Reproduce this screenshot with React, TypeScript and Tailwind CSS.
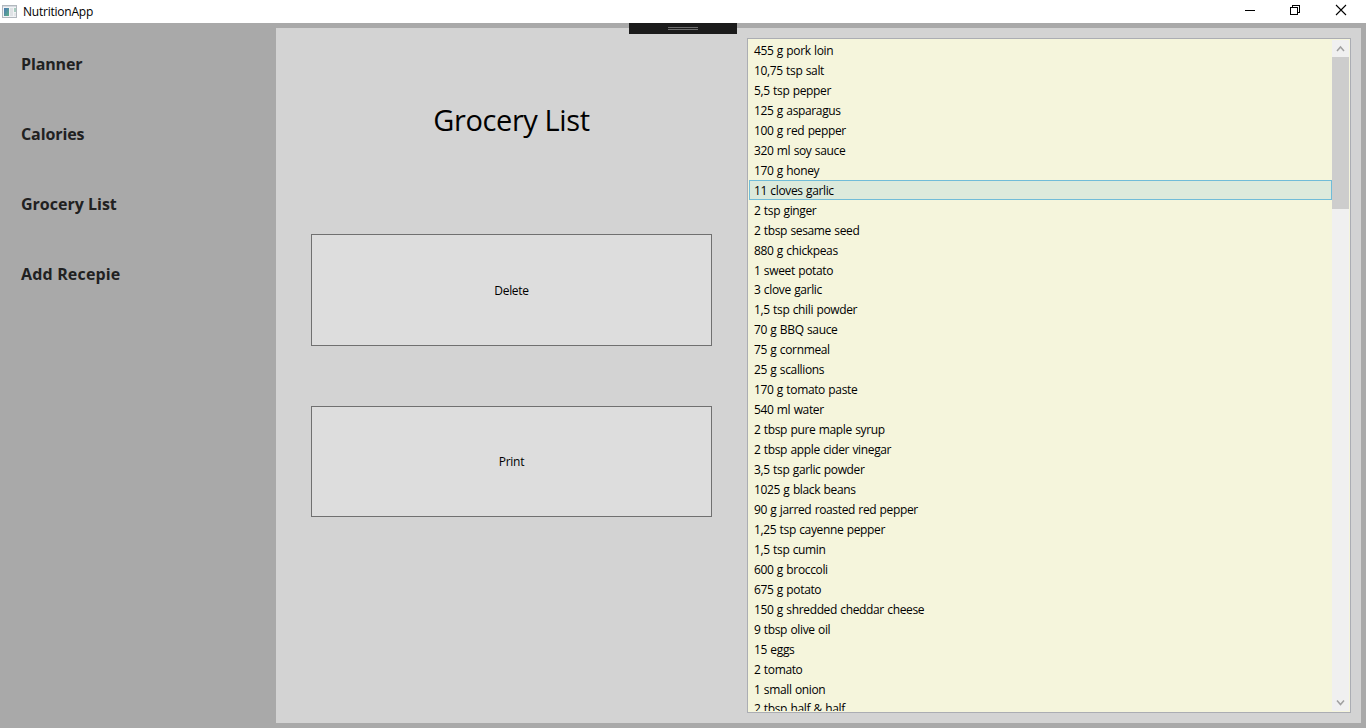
const nav = [
  { label: 'Planner', tracking: 'tracking-[-0.15px]' },
  { label: 'Calories', tracking: 'tracking-[-0.1px]' },
  { label: 'Grocery List', tracking: 'tracking-normal' },
  { label: 'Add Recepie', tracking: 'tracking-[0.17px]' },
];

const groceries = [
  '455 g pork loin',
  '10,75 tsp salt',
  '5,5 tsp pepper',
  '125 g asparagus',
  '100 g red pepper',
  '320 ml soy sauce',
  '170 g honey',
  '11 cloves garlic',
  '2 tsp ginger',
  '2 tbsp sesame seed',
  '880 g chickpeas',
  '1 sweet potato',
  '3 clove garlic',
  '1,5 tsp chili powder',
  '70 g BBQ sauce',
  '75 g cornmeal',
  '25 g scallions',
  '170 g tomato paste',
  '540 ml water',
  '2 tbsp pure maple syrup',
  '2 tbsp apple cider vinegar',
  '3,5 tsp garlic powder',
  '1025 g black beans',
  '90 g jarred roasted red pepper',
  '1,25 tsp cayenne pepper',
  '1,5 tsp cumin',
  '600 g broccoli',
  '675 g potato',
  '150 g shredded cheddar cheese',
  '9 tbsp olive oil',
  '15 eggs',
  '2 tomato',
  '1 small onion',
  '2 tbsp half & half',
];

const selected = 7;

function TitleBar() {
  return (
    <header className="flex h-[23px] shrink-0 items-center bg-white">
      <svg className="ml-[2px] h-[14px] w-4" viewBox="0 0 16 14">
        <defs>
          <linearGradient id="pane" x1="0" y1="0" x2="1" y2="1">
            <stop offset="0" stopColor="#4a78b4" />
            <stop offset="1" stopColor="#5fb088" />
          </linearGradient>
        </defs>
        <rect x="0.5" y="0.5" width="14" height="12" fill="#f2f3f5" stroke="#b2b8be" />
        <rect x="1" y="1" width="13" height="1" fill="#d5dae0" />
        <rect x="2" y="3" width="5" height="8" fill="url(#pane)" />
        <rect x="8" y="3" width="3" height="8" fill="#dfe2e5" />
        <rect x="12" y="3" width="2" height="4" fill="#a9cdc0" />
        <rect x="12" y="8" width="2" height="3" fill="#e3e6e8" />
      </svg>
      <span className="ml-[5px] text-[12px] leading-4 tracking-[-0.23px]">NutritionApp</span>
      <div className="mr-[2px] ml-auto flex h-full">
        <svg className="h-[23px] w-[46px]" viewBox="0 0 46 23" shapeRendering="crispEdges">
          <path d="M19 10.5h10" stroke="#000" fill="none" />
        </svg>
        <svg className="h-[23px] w-[46px]" viewBox="0 0 46 23" shapeRendering="crispEdges">
          <path d="M18.5 7.5h7v7h-7zM20.5 7.5v-2h7v7h-2" stroke="#000" fill="none" />
        </svg>
        <svg className="h-[23px] w-[46px]" viewBox="0 0 46 23">
          <path d="M18 5l10 10M28 5l-10 10" stroke="#000" fill="none" strokeWidth="1.1" />
        </svg>
      </div>
    </header>
  );
}

function ScrollBar() {
  return (
    <div className="flex w-[17px] shrink-0 flex-col bg-[#f0f0f0]">
      <svg className="h-[17px] w-[17px]" viewBox="0 0 17 17">
        <path d="M5 11l3.5-4 3.5 4" stroke="#a0a0a0" strokeWidth="1.5" fill="none" />
      </svg>
      <div className="h-[152px] bg-[#cdcdcd]" />
      <svg className="mt-auto h-[17px] w-[17px]" viewBox="0 0 17 17">
        <path d="M5 6.5l3.500 4L12 6.5" stroke="#a0a0a0" strokeWidth="1.5" fill="none" />
      </svg>
    </div>
  );
}

export default function App() {
  return (
    <div className="flex h-[728px] w-[1366px] flex-col overflow-hidden bg-[#a9a9a9] font-['Open_Sans','Noto_Sans',sans-serif] text-black">
      <TitleBar />
      <div className="relative flex flex-1 pt-[5px] pr-[5px] pb-[5px]">
        <nav className="flex w-[276px] shrink-0 flex-col pt-px pl-[21px] text-[16px] font-bold text-[#212121]">
          {nav.map(({ label, tracking }) => (
            <a key={label} className={'flex h-[70px] items-center ' + tracking}>
              {label}
            </a>
          ))}
        </nav>
        <main className="flex flex-1 bg-[#d3d3d3]">
          <section className="flex w-[471px] shrink-0 flex-col items-center">
            <h1 className="mt-[72px] text-[29px] leading-10 tracking-[-0.4px]">Grocery List</h1>
            <button className="mt-[94px] h-[112px] w-[401px] border border-[#707070] bg-[#dddddd] pt-px text-[12px] tracking-[-0.3px]">
              Delete
            </button>
            <button className="mt-[60px] h-[111px] w-[401px] border border-[#707070] bg-[#dddddd] text-[12px] tracking-[-0.3px]">
              Print
            </button>
          </section>
          <div className="mt-[10px] flex h-[675px] w-[604px] overflow-hidden border border-[#abadb3] bg-[#f5f5dc] p-px">
            <ul className="min-w-0 flex-1 overflow-hidden text-[12px] tracking-[-0.36px] [word-spacing:0.6px]">
              {groceries.map((item, i) => (
                <li
                  key={item}
                  className={
                    'flex h-[19.96px] items-start border pt-[2.03px] pl-1 leading-4 whitespace-pre ' +
                    (i === selected ? 'border-[#70bcd8] bg-[#dceadc]' : 'border-transparent')
                  }
                >
                  {item}
                </li>
              ))}
            </ul>
            <ScrollBar />
          </div>
        </main>
        <div className="absolute top-0 left-[629px] flex h-[11px] w-[108px] flex-col items-center bg-[#1b1b1b] pt-1">
          <div className="h-[3px] w-[30px] border-y border-[#6d6d6d]" />
        </div>
      </div>
    </div>
  );
}
